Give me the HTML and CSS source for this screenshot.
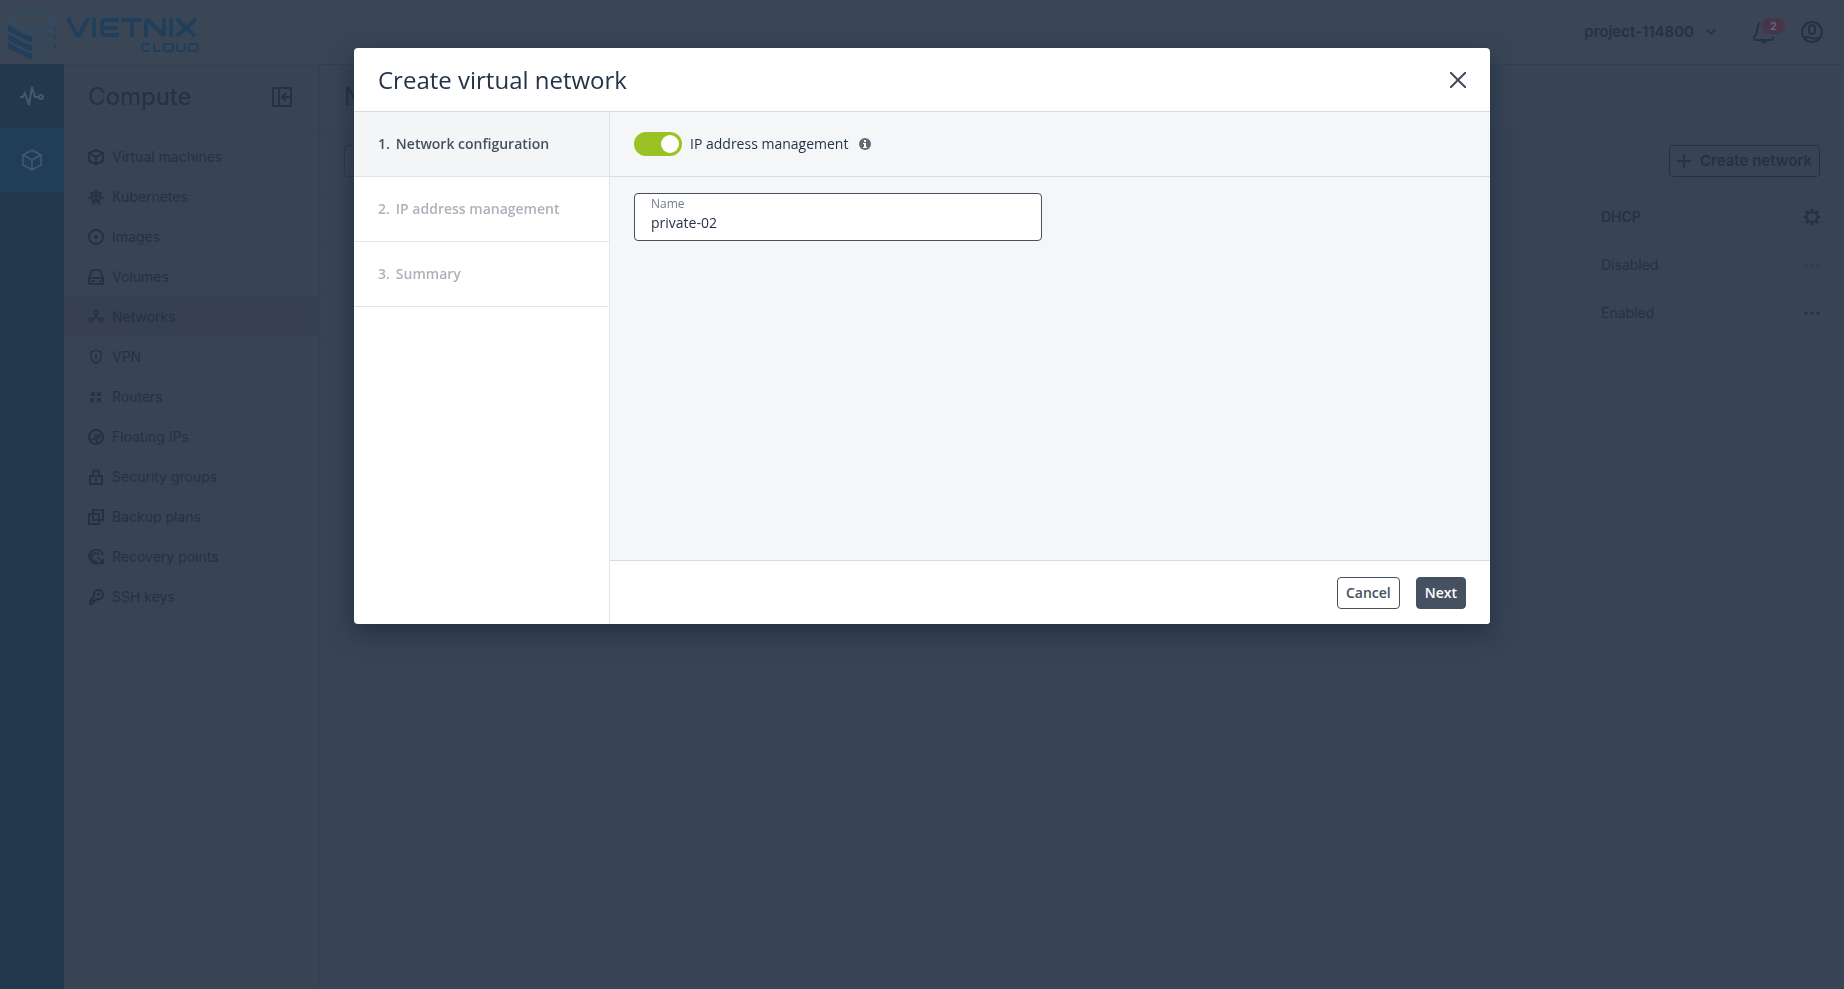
FILE: index.html
```html
<!DOCTYPE html>
<html lang="en">
<head>
<meta charset="utf-8">
<title>Create virtual network</title>
<link rel="stylesheet" href="styles.css">
</head>
<body>
<div class="app">
  <header class="topbar">
    <a class="logo" href="#" aria-label="Vietnix Cloud">
      <svg class="logo-mark" viewBox="0 0 50 54" fill="none">
        <path d="M1 14 19 4q5-3 10 0l18 10M1 16l19 10q4 2 8 0l20-11" stroke="#2d4e6a" stroke-width="1.500"/>
        <path d="M27 35 45 24M27 43 46 32M27 52 46 41" stroke="#2d4e6a" stroke-width="1.500"/>
        <path d="M0 20 16 29q4 2 8 2v6q-4 0-8-3L0 26zM0 29l16 9q4 2 8 2v6q-4 0-8-3L0 35zM0 37l16 9q4 2 8 2v6q-4 0-8-3L0 43z" fill="#203f5c"/>
        <g stroke="#233f5a" stroke-width="1"><circle cx="47" cy="24" r="1.500"/><circle cx="47" cy="32" r="1.500"/><circle cx="47" cy="41" r="1.500"/></g>
      </svg>
      <svg class="logo-word" viewBox="0 0 134 54" fill="none" stroke="#213e5b" aria-hidden="true">
        <path stroke-width="4" d="M2 13 10 29q2 3 4 0L22 13M28 13v19M53 15H39q-3 0-3 4v7q0 4 3 4h14M36 23h16M55 15h21M66 15v17M80 32V17q0-3 3-1l13 13q2 2 2-1V13M105 13v19M111 14l18 17M130 14 111 31"/>
        <path stroke-width="2" d="M84 39h-6q-2 0-2 2v3q0 2 2 2h6M88 38v6q0 2 2 2h5M100 39h5q2 0 2 2v3q0 2-2 2h-5q-2 0-2-2v-3q0-2 2-2zM111 38v6q0 2 2 2h4q2 0 2-2v-6M123 39h6q3 0 3 2v3q0 2-3 2h-6z"/>
      </svg>
    </a>
    <div class="account">
      <button class="project" type="button">project-114800
        <svg class="chevron" viewBox="0 0 12 8"><path d="m1 1 5 5 5-5"/></svg>
      </button>
      <button class="bell" type="button" aria-label="Notifications">
        <svg class="line-icon" viewBox="0 0 24 24"><path d="M8 3C4 6 6 11 4 14c-1 2-2 2-2 4 0 1 1 2 2 2h16q1 0 1-3M9 20q3 5 6 0"/></svg>
        <span class="badge">2</span>
      </button>
      <button class="user" type="button" aria-label="Profile">
        <svg class="line-icon" viewBox="0 0 24 24"><circle cx="12" cy="12" r="10"/><rect x="9" y="5" width="6" height="9" rx="3"/><path d="M4 18c3-2 5-1 8 0s5 0 8 0"/></svg>
      </button>
    </div>
  </header>
  <div class="workspace">
    <nav class="rail" aria-label="Sections">
      <a class="rail-item" href="#" aria-label="Monitoring"><svg viewBox="0 0 24 24"><path d="M0 13h3l2-4 4 12 3-18 3 10h4"/><circle cx="21" cy="13" r="2"/></svg></a>
      <a class="rail-item rail-active" href="#" aria-label="Compute"><svg viewBox="0 0 24 24"><path d="m12 2 9 5v10l-9 5-9-5V7zM3 7l9 5 9-5M12 12v10"/></svg></a>
    </nav>
    <nav class="sidebar" aria-label="Compute">
      <div class="sidebar-head">
        <h2>Compute</h2>
        <button class="collapse" type="button" aria-label="Collapse menu"><svg class="line-icon" viewBox="0 0 20 20"><rect x="1" y="1" width="18" height="18" rx="1"/><path d="M7 1v18M20 10h-9M14 6l-4 4 4 4"/></svg></button>
      </div>
      <ul class="menu">
        <li><a href="#"><svg viewBox="0 0 16 16"><path d="m8 1 7 3v8l-7 3-7-3V4zM1 4l7 4 7-4M8 8v7"/></svg>Virtual machines</a></li>
        <li><a href="#"><svg class="thin" viewBox="0 0 16 16"><circle cx="8" cy="8" r="5" stroke-width="2"/><circle cx="8" cy="8" r="1"/><path stroke-width="1.500" d="M8 0v7M8 9l-4 7M8 9l4 7M0 9l7-1M16 9 9 8M2 3l5 4M14 3 9 7"/></svg>Kubernetes</a></li>
        <li><a href="#"><svg viewBox="0 0 16 16"><circle cx="8" cy="8" r="7"/><circle cx="8" cy="8" r="1"/></svg>Images</a></li>
        <li><a href="#"><svg viewBox="0 0 16 16"><path d="M4 1h8l3 8v5q0 1-1 1H2q-1 0-1-1V9zM1 9h14M3 12h4M11 12h2"/></svg>Volumes</a></li>
        <li><a class="current" href="#"><svg class="thin" viewBox="0 0 16 16"><g stroke-width="1.500"><circle cx="8" cy="3" r="2"/><circle cx="3" cy="11" r="2"/><circle cx="13" cy="11" r="2"/><path d="M8 5v3L5 10M8 8l3 2"/></g></svg>Networks</a></li>
        <li><a href="#"><svg class="thin" viewBox="0 0 16 16"><path stroke-width="1.500" d="m8 1 5 2v5q0 4-5 6-5-2-5-6V3z"/><path stroke-width="2" d="M8 5v5"/></svg>VPN</a></li>
        <li><a href="#"><svg class="solid" viewBox="0 0 16 16"><path d="M7 7H2l2-2-2-2 1-1 2 2 2-2zM9 7h5l-2-2 2-2-1-1-2 2-2-2zM7 9H2v5l2-2 2 2 1-1-2-2zM9 9h5l-2 2 2 2-1 1-2-2-2 2z"/></svg>Routers</a></li>
        <li><a href="#"><svg class="thin" viewBox="0 0 16 16"><circle cx="8" cy="8" r="7" stroke-width="2"/><path stroke-width="1.500" d="M7 5v4q-1 2-3 1H2M9 12V5.500h1.500q3 0 1 3H9M4 10q6 0 5 5"/></svg>Floating IPs</a></li>
        <li><a href="#"><svg viewBox="0 0 16 16"><path d="M2 7h12v8H2zM5 7V4q0-3 3-3t3 3v3M8 9v4"/></svg>Security groups</a></li>
        <li><a href="#"><svg viewBox="0 0 16 16"><path d="M5 1h10v10H5zM5 5H1v10h10v-4M5 5h6v6"/></svg>Backup plans</a></li>
        <li><a href="#"><svg viewBox="0 0 16 16"><path d="M15 6A7 7 0 1 0 11 14M11 6a4 4 0 1 0-2 6"/><path class="tip" d="M10 15h6V9l-2 2-4-3-1 1 4 3z"/></svg>Recovery points</a></li>
        <li><a href="#"><svg viewBox="0 0 16 16"><path d="M6 8C5 4 7 1 10 1s5 2 5 5-3 5-6 4l-2 2H5v2H4v1H2v-3z"/><circle class="tip" cx="10.500" cy="5.500" r="1.500"/></svg>SSH keys</a></li>
      </ul>
    </nav>
    <main class="content">
      <h1>Networks</h1>
      <div class="toolbar">
        <input class="search" type="text" aria-label="Search">
        <button class="create" type="button"><svg class="line-icon" viewBox="0 0 14 14"><path d="M7 0v14M0 7h14"/></svg>Create network</button>
      </div>
      <table class="networks">
        <thead><tr><th class="pick"><input type="checkbox" aria-label="Select all"></th><th>DHCP</th><th class="actions"><button type="button" aria-label="Columns"><svg viewBox="0 0 16 16"><circle cx="8" cy="8" r="5"/><path stroke-width="3" d="M8 0v3M8 13v3M0 8h3M13 8h3M2 2l2.500 2.500M11.500 11.500 14 14M14 2l-2.500 2.500M4.500 11.500 2 14"/></svg></button></th></tr></thead>
        <tbody>
          <tr><td class="pick"><input type="checkbox" aria-label="Select row 1"></td><td>Disabled</td><td class="actions"><button class="faint" type="button" aria-label="More"><svg class="dots" viewBox="0 0 16 16"><circle cx="2" cy="8" r="1.500"/><circle cx="8" cy="8" r="1.500"/><circle cx="14" cy="8" r="1.500"/></svg></button></td></tr>
          <tr class="shaded"><td class="pick"><input type="checkbox" aria-label="Select row 2"></td><td>Enabled</td><td class="actions"><button type="button" aria-label="More"><svg class="dots" viewBox="0 0 16 16"><circle cx="2" cy="8" r="1.500"/><circle cx="8" cy="8" r="1.500"/><circle cx="14" cy="8" r="1.500"/></svg></button></td></tr>
        </tbody>
      </table>
    </main>
  </div>
</div>

<div class="overlay">
  <section class="dialog" role="dialog" aria-modal="true" aria-labelledby="dialog-title">
    <header class="dialog-head">
      <h2 id="dialog-title">Create virtual network</h2>
      <button class="close" type="button" aria-label="Close"><svg viewBox="0 0 16 16"><path d="m0 0 16 16M16 0 0 16"/></svg></button>
    </header>
    <div class="dialog-body">
      <ol class="steps">
        <li class="step-active"><span>1.</span>Network configuration</li>
        <li><span>2.</span>IP address management</li>
        <li><span>3.</span>Summary</li>
      </ol>
      <form class="panel">
        <div class="switch-row">
          <input class="switch" id="ipam" type="checkbox" role="switch" checked>
          <label for="ipam">IP address management</label>
          <svg class="info" viewBox="0 0 12 12"><circle cx="6" cy="6" r="6"/><path d="M5 2h2v2H5zM4 5h3v4h1v1H4V9h1V6H4z"/></svg>
        </div>
        <div class="fields">
          <div class="field">
            <label for="name">Name</label>
            <input id="name" type="text" value="private-02">
          </div>
        </div>
        <footer class="dialog-foot">
          <button class="btn" type="button">Cancel</button>
          <button class="btn btn-primary" type="button">Next</button>
        </footer>
      </form>
    </div>
  </section>
</div>
</body>
</html>
```

FILE: styles.css
```css
* { box-sizing: border-box; }

body {
  margin: 0;
  background: #384455;
  color: #253243;
  font: 14px/24px Inter, "Liberation Sans", sans-serif;
}

h1, h2 { margin: 0; font-size: 24px; line-height: 32px; font-weight: 400; }
a { color: inherit; text-decoration: none; }
button { padding: 0; border: 0; background: none; color: inherit; font: inherit; }
svg { display: block; flex: none; }
ul, ol { margin: 0; padding: 0; list-style: none; }

.line-icon { fill: none; stroke: #253243; stroke-width: 2; }

.app { min-height: 100vh; display: flex; flex-direction: column; }

.topbar {
  display: flex;
  justify-content: space-between;
  align-items: center;
  height: 64px;
  padding: 0 20px 0 8px;
  background: #3a4656;
}
.logo { display: flex; gap: 8px; align-items: center; }
.logo-mark { width: 50px; height: 54px; }
.logo-word { width: 134px; height: 54px; }

.account { display: flex; align-items: center; }
.project { display: flex; align-items: center; gap: 12px; font-size: 15px; font-weight: 600; }
.chevron { width: 10px; height: 8px; fill: none; stroke: #253243; stroke-width: 2; }
.bell { position: relative; margin-left: 36px; }
.bell svg, .user svg { width: 24px; height: 24px; }
.badge {
  position: absolute;
  top: -2px;
  left: 10px;
  width: 23px;
  height: 16px;
  border-radius: 8px;
  background: #49354a;
  color: #626a79;
  font-size: 11px;
  line-height: 16px;
  font-weight: 600;
}
.user { margin-left: 24px; }

.workspace { flex: 1; display: flex; }
.rail { width: 64px; background: #21384d; }
.rail-item { display: flex; height: 64px; align-items: center; justify-content: center; }
.rail-item svg { width: 24px; height: 24px; fill: none; stroke: #47586a; stroke-width: 2; }
.rail-active { background: #213e58; }
.rail-active svg { stroke-width: 1.5; }

.sidebar { width: 256px; background: #384454; border-top: 1px solid #344051; border-right: 1px solid #334051; }
.sidebar-head {
  display: flex;
  align-items: center;
  justify-content: space-between;
  height: 64px;
  padding: 0 27px 0 24px;
  border-bottom: 1px solid #364253;
}
.collapse svg { width: 20px; height: 20px; }
.menu { padding-top: 7px; }
.menu a { display: flex; align-items: center; gap: 8px; height: 40px; padding: 1px 0 0 24px; }
.menu svg { width: 16px; height: 16px; fill: none; stroke: #253243; stroke-width: 2; }
.menu .thin { stroke-width: 1; }
.menu .solid, .menu .tip { fill: #253243; stroke: none; }
.menu .current { background: #364052; }

.content { flex: 1; border-top: 1px solid #344051; }
.content h1 { height: 64px; padding: 16px 24px; background: #394556; border-bottom: 1px solid #364154; }
.toolbar { display: flex; justify-content: space-between; padding: 16px 24px 15px; }
.search { width: 320px; height: 32px; border: 1px solid #2c394a; border-radius: 4px; background: none; }
.create {
  display: flex;
  align-items: center;
  gap: 9px;
  height: 32px;
  padding: 0 7px;
  border: 1px solid #253243;
  border-radius: 4px;
  font-size: 15px;
  font-weight: 600;
}
.create svg { width: 14px; height: 14px; }

.networks { width: 100%; border-collapse: collapse; border-top: 1px solid #364154; }
.networks tr { height: 48px; border-bottom: 1px solid #364254; }
.networks th, .networks td { padding: 1px 0 0; text-align: left; }
.networks th { font-weight: 600; }
.networks .pick { padding-left: 24px; }
.networks .pick input { display: block; width: 16px; height: 16px; margin: 0; appearance: none; border: 1px solid #334051; border-radius: 2px; }
.networks .actions { width: 64px; padding-left: 23px; border-left: 1px solid #364254; }
.networks .actions button { display: block; }
.networks td:nth-child(2), .networks th:nth-child(2) { width: 179px; }
.actions svg { width: 16px; height: 16px; fill: none; stroke: #253243; stroke-width: 2; }
.actions .dots { fill: #253243; stroke: none; }
.faint { opacity: .3; }
.shaded { background: #384454; }

.overlay {
  position: fixed;
  inset: 0;
  display: flex;
  justify-content: center;
  align-items: flex-start;
  padding: 48px 24px;
  color: #253348;
  font: 14px/24px "Open Sans", "Noto Sans", sans-serif;
}
.dialog {
  width: 100%;
  max-width: 1136px;
  overflow: hidden;
  border-radius: 4px;
  background: #fff;
  box-shadow: 0 8px 24px rgba(20, 34, 52, .6);
}
.dialog-head {
  display: flex;
  align-items: center;
  justify-content: space-between;
  height: 64px;
  padding: 0 24px;
  border-bottom: 1px solid #d9dce0;
}
.close svg { width: 16px; height: 16px; fill: none; stroke: #3f4b5c; stroke-width: 2; }
.dialog-body { display: flex; }
.steps { width: 256px; border-right: 1px solid #e2e4e7; font-weight: 600; color: #adb2ba; }
.steps li { display: flex; gap: 6px; padding: 20px 24px; border-bottom: 1px solid #e2e4e7; }
.steps .step-active { background: #f4f5f7; color: #455160; }

.panel { flex: 1; display: flex; flex-direction: column; background: #f4f6f8; }
.switch-row { display: flex; align-items: center; gap: 8px; padding: 20px 24px; border-bottom: 1px solid #d9dce0; }
.switch { width: 48px; height: 24px; margin: 0; padding: 3px; appearance: none; border-radius: 12px; background: #9bc225; }
.switch::before { content: ""; display: block; width: 18px; height: 18px; margin-left: auto; margin-right: 0; border-radius: 50%; background: #fff; }
.info { width: 12px; height: 12px; margin-left: 3px; fill: #636b7b; }
.info path { fill: #fff; }
.fields { min-height: 383px; padding: 16px 24px; }
.field {
  width: 408px;
  max-width: 100%;
  height: 48px;
  padding: 2px 16px;
  border: 1px solid #455160;
  border-radius: 4px;
  background: #fff;
}
.field label { display: block; font-size: 12px; line-height: 16px; color: #757d89; }
.field input { display: block; width: 100%; height: 22px; padding: 0; border: 0; outline: 0; background: none; color: inherit; font: inherit; }
.dialog-foot {
  display: flex;
  justify-content: flex-end;
  gap: 16px;
  padding: 16px 24px 15px;
  border-top: 1px solid #d9dce0;
  background: #fff;
}
.btn { height: 32px; padding: 0 8px; border: 1px solid #455160; border-radius: 4px; background: #fff; color: #455160; font-weight: 600; }
.btn-primary { background: #455160; color: #fff; }
```
